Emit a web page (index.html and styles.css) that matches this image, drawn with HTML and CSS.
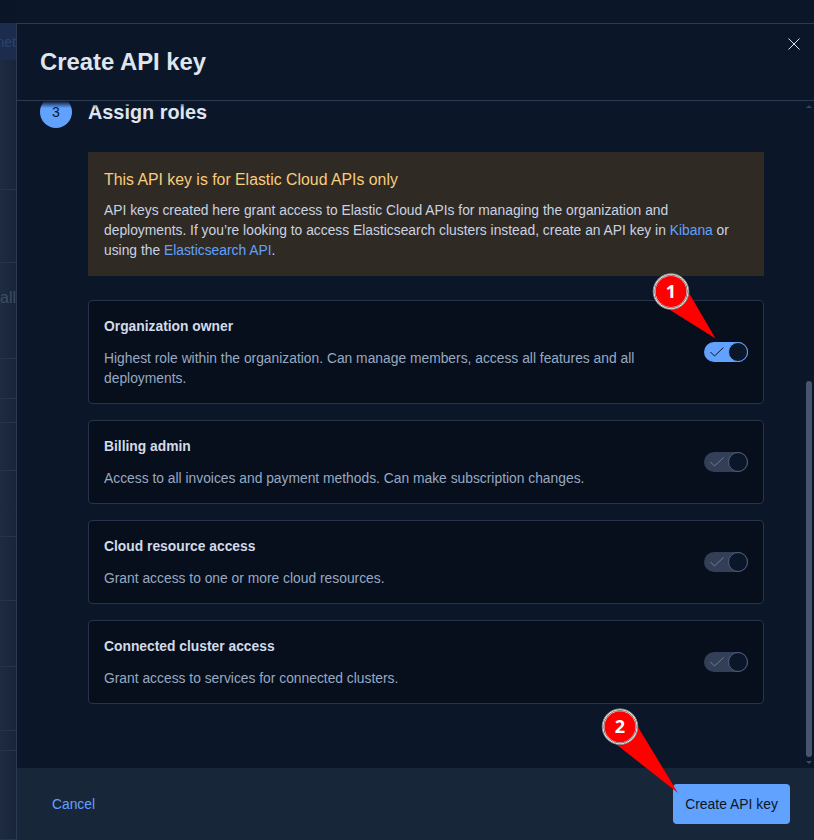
FILE: index.html
```html
<!DOCTYPE html>
<html lang="en">
<head>
<meta charset="utf-8">
<title>Create API key</title>
<link rel="stylesheet" href="styles.css">
</head>
<body>
<div class="page">
  <div class="backdrop">
    <div class="bd-top"></div>
    <div class="bd-head"><span class="bd-link">net</span></div>
    <div class="bd-row"></div>
    <div class="bd-row"></div>
    <div class="bd-row bd-all"><span class="bd-text">all</span></div>
    <div class="bd-row"></div>
    <div class="bd-row"></div>
    <div class="bd-row"></div>
    <div class="bd-row"></div>
    <div class="bd-row"></div>
    <div class="bd-row"></div>
    <div class="bd-row"></div>
    <div class="bd-row"></div>
    <div class="bd-row"></div>
    <div class="bd-row bd-last"></div>
  </div>

  <div class="modal">
    <header class="modal-header">
      <h1 class="modal-title">Create API key</h1>
      <button class="close" aria-label="Close">
        <svg class="close-icon" viewBox="0 0 12 12" width="12" height="12"><path d="M.5.5l11 11M11.5.5l-11 11"/></svg>
      </button>
    </header>

    <div class="modal-body">
      <div class="scroll">
        <div class="step">
          <span class="step-num">3</span>
          <h2 class="step-title">Assign roles</h2>
        </div>
        <div class="step-content">
          <div class="callout">
            <div class="callout-title">This API key is for Elastic Cloud APIs only</div>
            <p class="callout-text">API keys created here grant access to Elastic Cloud APIs for managing the organization and deployments. If you’re looking to access Elasticsearch clusters instead, create an API key in <a class="link">Kibana</a> or using the <a class="link">Elasticsearch API</a>.</p>
          </div>

          <div class="roles">
            <div class="role">
              <div class="role-text">
                <div class="role-name">Organization owner</div>
                <p class="role-desc">Highest role within the organization. Can manage members, access all features and all deployments.</p>
              </div>
              <span class="toggle on">
                <svg class="check" viewBox="0 0 14 10" width="14" height="10"><path d="M.5 5l4 4 9-8.5"/></svg>
                <span class="thumb"></span>
              </span>
            </div>
            <div class="role">
              <div class="role-text">
                <div class="role-name">Billing admin</div>
                <p class="role-desc">Access to all invoices and payment methods. Can make subscription changes.</p>
              </div>
              <span class="toggle">
                <svg class="check" viewBox="0 0 14 10" width="14" height="10"><path d="M.5 5l4 4 9-8.5"/></svg>
                <span class="thumb"></span>
              </span>
            </div>
            <div class="role">
              <div class="role-text">
                <div class="role-name">Cloud resource access</div>
                <p class="role-desc">Grant access to one or more cloud resources.</p>
              </div>
              <span class="toggle">
                <svg class="check" viewBox="0 0 14 10" width="14" height="10"><path d="M.5 5l4 4 9-8.5"/></svg>
                <span class="thumb"></span>
              </span>
            </div>
            <div class="role">
              <div class="role-text">
                <div class="role-name">Connected cluster access</div>
                <p class="role-desc">Grant access to services for connected clusters.</p>
              </div>
              <span class="toggle">
                <svg class="check" viewBox="0 0 14 10" width="14" height="10"><path d="M.5 5l4 4 9-8.5"/></svg>
                <span class="thumb"></span>
              </span>
            </div>
          </div>
        </div>
      </div>
      <div class="scrollbar">
        <span class="arrow arrow-up"></span>
        <span class="sb-track"><span class="sb-thumb"></span></span>
        <span class="arrow arrow-down"></span>
      </div>
    </div>

    <footer class="modal-footer">
      <a class="cancel">Cancel</a>
      <button class="primary">Create API key</button>
    </footer>
  </div>

  <svg class="annotations" viewBox="0 0 814 840" width="814" height="840">
    <g>
      <polygon class="pointer" points="670,310 689,293 715.5,338.5"/>
      <circle class="ring-outer" cx="671" cy="291.5" r="17.8"/>
      <circle class="ring-inner" cx="671" cy="291.5" r="16.4"/>
      <circle class="badge" cx="671" cy="291.5" r="15.5"/>
      <text class="badge-num" x="671" y="298">1</text>
    </g>
    <g>
      <polygon class="pointer" points="617,745 638,727 678,793"/>
      <circle class="ring-outer" cx="620" cy="726.7" r="17.8"/>
      <circle class="ring-inner" cx="620" cy="726.7" r="16.4"/>
      <circle class="badge" cx="620" cy="726.7" r="15.5"/>
      <text class="badge-num" x="620" y="733">2</text>
    </g>
  </svg>
</div>
</body>
</html>
```

FILE: styles.css
```css
* { box-sizing: border-box; }
html, body { margin: 0; padding: 0; }
body {
  width: 814px;
  height: 840px;
  overflow: hidden;
  background: #0b1628;
  font-family: "Liberation Sans", Arial, sans-serif;
  font-size: 13.84px;
  line-height: 20px;
}
.page {
  position: relative;
  width: 814px;
  height: 840px;
  display: flex;
  overflow: hidden;
}

/* dimmed page behind the flyout */
.backdrop {
  width: 16px;
  flex: none;
  height: 840px;
  display: grid;
  grid-template-rows: 23px 37px 130px 73px 96px 40px 24px 48px 66px 64px 66px 64px 20px 1fr;
  background: linear-gradient(90deg, #1e2c42, #17243a);
}
.bd-top { background: #0a1628; }
.bd-head {
  background: #1b2c4c;
  overflow: hidden;
  display: flex;
  justify-content: flex-end;
  align-items: center;
}
.bd-link { color: #2c4370; font-size: 14px; white-space: nowrap; }
.bd-row { border-bottom: 1px solid #263449; overflow: hidden; }
.bd-last { border-bottom: 0; }
.bd-all { display: flex; justify-content: flex-end; padding-top: 25px; }
.bd-text { color: #3f4c61; font-size: 16px; }

/* flyout */
.modal {
  flex: 1;
  min-width: 0;
  margin-top: 23px;
  display: flex;
  flex-direction: column;
  background: #0b1628;
  border-top: 1px solid #2b3a52;
  border-left: 1px solid #2b3a52;
}
.modal-header {
  flex: none;
  position: relative;
  height: 77px;
  padding: 23px 23px 0;
  border-bottom: 1px solid #2b3a52;
}
.modal-title {
  margin: 0;
  font-size: 23.85px;
  line-height: 30px;
  font-weight: 700;
  color: #dfe5ef;
}
.close {
  position: absolute;
  top: 14px;
  right: 14px;
  width: 12px;
  height: 12px;
  padding: 0;
  border: 0;
  background: none;
  display: flex;
}
.close-icon { fill: none; stroke: #dfe5ef; stroke-width: 1; }

.modal-body {
  position: relative;
  flex: 1;
  min-height: 0;
  display: flex;
  overflow: hidden;
}
/* scroll mask fading the clipped content under the header */
.modal-body::before {
  content: "";
  position: absolute;
  left: 0;
  right: 0;
  top: 0;
  height: 7px;
  background: linear-gradient(180deg, #0b1628, rgba(11, 22, 40, 0));
}
.scroll {
  flex: 1;
  min-width: 0;
  padding: 0 0 0 23px;
  overflow: hidden;
}
.step {
  display: flex;
  gap: 16px;
  height: 32px;
  align-items: center;
  margin-top: -5px;
}
.step-num {
  width: 32px;
  height: 32px;
  flex: none;
  border-radius: 50%;
  background: #61a2ff;
  color: #0b1628;
  font-size: 14px;
  display: flex;
  align-items: center;
  justify-content: center;
}
.step-title {
  margin: 0;
  font-size: 19.85px;
  line-height: 28px;
  font-weight: 700;
  color: #dfe5ef;
}
.step-content {
  margin: 24px 0 0 48px;
  width: 676px;
}
.callout {
  height: 124px;
  padding: 16px;
  background: #302a24;
}
.callout-title {
  font-size: 15.84px;
  line-height: 24px;
  color: #f8cd7c;
  margin-bottom: 8px;
}
.callout-text {
  margin: 0;
  color: #c9d3e2;
}
.link { color: #61a2ff; }

.roles {
  margin-top: 24px;
  display: flex;
  flex-direction: column;
  gap: 16px;
}
.role {
  display: flex;
  align-items: center;
  gap: 40px;
  padding: 15px;
  background: #070f1d;
  border: 1px solid #263349;
  border-radius: 4px;
}
.role-text { flex: 1; min-width: 0; }
.role-name {
  font-weight: 700;
  color: #d3dbe8;
  margin-bottom: 12px;
}
.role-desc {
  margin: 0;
  color: #98a9c2;
}
.toggle {
  position: relative;
  flex: none;
  width: 44px;
  height: 20px;
  border-radius: 10px;
  background: #323f56;
  display: flex;
  align-items: center;
  padding-left: 6px;
}
.toggle.on { background: #61a2ff; }
.check { fill: none; stroke: #6d7d96; stroke-width: 1; }
.toggle.on .check { stroke: #0b1628; }
.thumb {
  position: absolute;
  top: 0;
  right: 0;
  width: 20px;
  height: 20px;
  border-radius: 50%;
  background: #0b1628;
  border: 1px solid #4f6180;
}
.toggle.on .thumb { border-color: #61a2ff; }

.scrollbar {
  flex: none;
  width: 14px;
  padding: 4px 2px 4px 6px;
  display: flex;
  flex-direction: column;
  align-items: center;
}
.arrow {
  flex: none;
  width: 0;
  height: 0;
  border-left: 3px solid transparent;
  border-right: 3px solid transparent;
}
.arrow-up { border-bottom: 3px solid #3a4a63; }
.arrow-down { border-top: 3px solid #3a4a63; }
.sb-track {
  flex: 1;
  width: 6px;
  padding: 273px 0 4px;
  display: flex;
}
.sb-thumb {
  flex: 1;
  border-radius: 3px;
  background: #46566f;
}

.modal-footer {
  flex: none;
  height: 72px;
  padding: 16px 24px 16px 35px;
  background: #18263a;
  display: flex;
  align-items: center;
  justify-content: space-between;
}
.cancel { color: #61a2ff; }
.primary {
  width: 117px;
  height: 40px;
  border: 0;
  border-radius: 4px;
  background: #61a2ff;
  color: #0b1628;
  font-family: inherit;
  font-size: 13.9px;
}

/* hand-drawn callouts on top of the screenshot */
.annotations {
  position: absolute;
  left: 0;
  top: 0;
  pointer-events: none;
}
.pointer { fill: #ff0000; }
.ring-outer { fill: #ffffff; stroke: #8a8a8a; stroke-width: 1; }
.ring-inner { fill: #ffffff; stroke: #777777; stroke-width: 1; }
.badge { fill: #ff0000; }
.badge-num {
  fill: #ffffff;
  font-family: "Noto Sans", sans-serif;
  font-size: 18px;
  font-weight: 700;
  text-anchor: middle;
}
```
